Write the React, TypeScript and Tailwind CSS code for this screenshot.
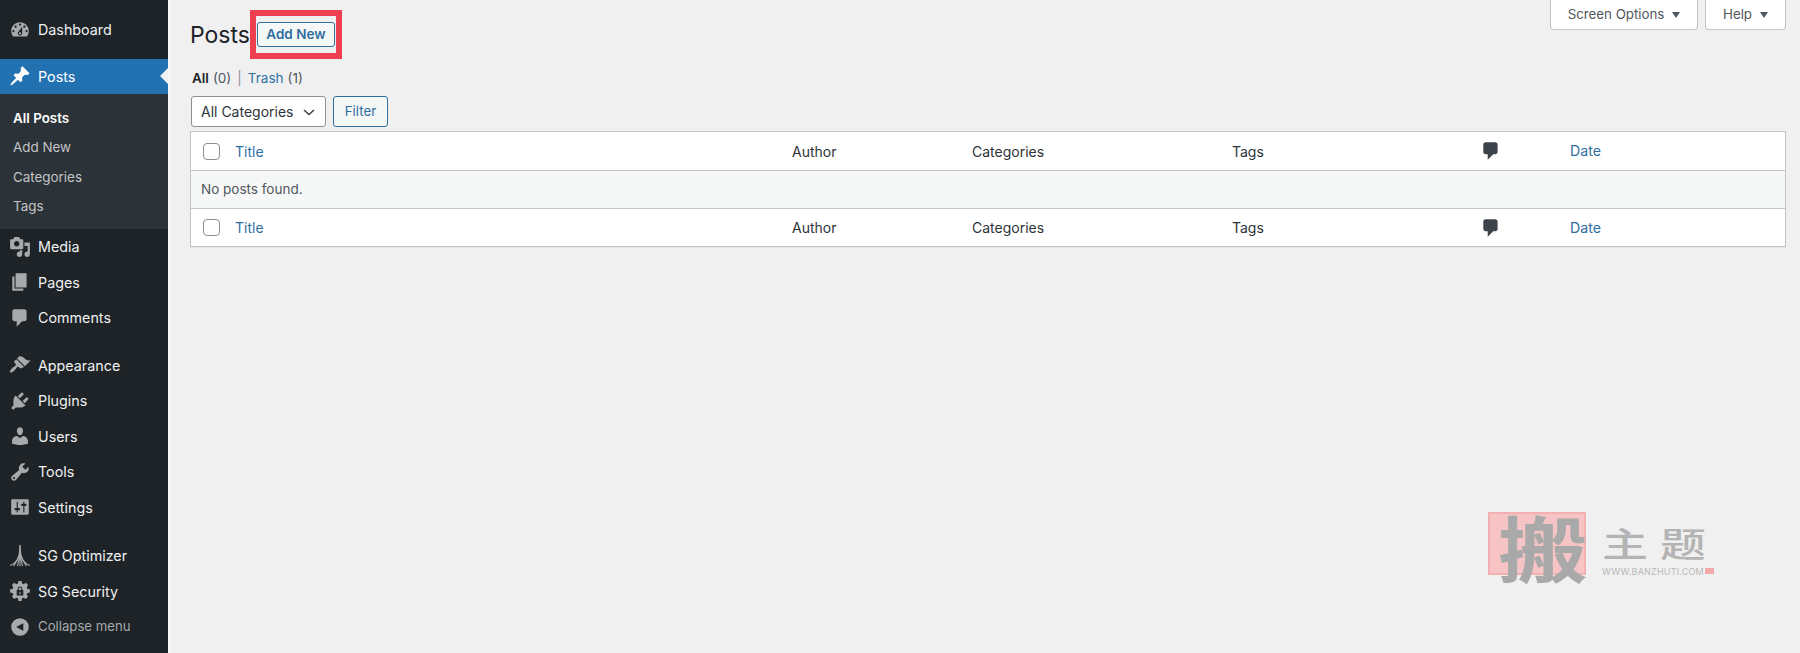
import React from "react";

const P: Record<string, string> = {
  dashboard: "M3.76 16h12.48c1.1-1.37 1.76-3.11 1.76-5 0-4.42-3.58-8-8-8s-8 3.58-8 8c0 1.89.66 3.63 1.76 5zM10 4c.55 0 1 .45 1 1s-.45 1-1 1-1-.45-1-1 .45-1 1-1zM6 6c.55 0 1 .45 1 1s-.45 1-1 1-1-.45-1-1 .45-1 1-1zm8 0c.55 0 1 .45 1 1s-.45 1-1 1-1-.45-1-1 .45-1 1-1zm-5.37 5.55L12 7v6c0 1.1-.9 2-2 2s-2-.9-2-2c0-.57.24-1.08.63-1.45zM4 10c.55 0 1 .45 1 1s-.45 1-1 1-1-.45-1-1 .45-1 1-1zm12 0c.55 0 1 .45 1 1s-.45 1-1 1-1-.45-1-1 .45-1 1-1zm-5 3c0-.55-.45-1-1-1s-1 .45-1 1 .45 1 1 1 1-.45 1-1z",
  post: "M10.44 3.02l1.82-1.82 6.36 6.35-1.83 1.82c-1.05-.68-2.48-.57-3.41.36l-.75.75c-.92.93-1.04 2.35-.35 3.41l-1.83 1.82-2.41-2.41-2.8 2.79c-.42.42-3.38 2.71-3.8 2.29s1.86-3.39 2.28-3.81l2.79-2.79L4.1 9.36l1.83-1.82c1.05.69 2.48.57 3.4-.36l.75-.75c.93-.92 1.05-2.35.36-3.41z",
  media: "M13 11V4c0-.55-.45-1-1-1h-1.67L9 1H5L3.67 3H2c-.55 0-1 .45-1 1v7c0 .55.45 1 1 1h10c.55 0 1-.45 1-1zM7 4.5c1.38 0 2.5 1.12 2.5 2.5S8.38 9.5 7 9.5 4.5 8.38 4.5 7 5.62 4.5 7 4.5zM14 6h5v10.5c0 1.38-1.12 2.5-2.5 2.5S14 17.88 14 16.5s1.12-2.5 2.5-2.5c.17 0 .34.02.5.05V9h-3V6zm-4 8.05V13h2v3.5c0 1.38-1.12 2.5-2.5 2.5S7 17.88 7 16.5 8.12 14 9.5 14c.17 0 .34.02.5.05z",
  page: "M6 15V2h10v13H6zm-1 1h8v2H3V5h2v11z",
  comments: "M5 2h9c1.1 0 2 .9 2 2v7c0 1.1-.9 2-2 2h-2l-5 5v-5H5c-1.1 0-2-.9-2-2V4c0-1.1.9-2 2-2z",
  appearance: "M14.48 11.06L7.41 3.99l1.5-1.5c.5-.56 2.3-.47 3.51.32 1.21.8 1.43 1.28 2.91 2.1 1.18.64 2.45 1.26 4.45.85zm-.71.71L6.7 4.7 4.93 6.47c-.39.39-.39 1.02 0 1.41l1.06 1.06c.39.39.39 1.03 0 1.42-.6.6-1.43 1.11-2.21 1.69-.35.26-.7.53-1.01.84-1.35 1.34-2.38 3.09-1.68 3.79.7.7 2.45-.33 3.8-1.68.31-.31.58-.66.85-1.01.58-.78 1.08-1.61 1.69-2.21.39-.39 1.02-.39 1.41 0l1.06 1.06c.39.39 1.02.39 1.41 0z",
  plugins: "M13.11 4.36L9.87 7.6 8 5.73l3.24-3.24c.35-.34 1.05-.2 1.56.32.52.51.66 1.21.31 1.55zm-8 1.77l.91-1.12 9.01 9.01-1.19.84c-.71.71-2.63 1.16-3.82 1.16H6.14L4.9 17.26c-.59.59-1.54.59-2.12 0-.59-.58-.59-1.53 0-2.12l1.24-1.24v-3.88c0-1.13.4-3.19 1.09-3.89zm7.26 3.97l3.24-3.24c.34-.35 1.04-.21 1.55.31.52.51.66 1.21.31 1.55l-3.24 3.25z",
  users: "M10 9.25c-2.27 0-2.73-3.44-2.73-3.44C7 4.02 7.82 2 9.97 2c2.16 0 2.98 2.02 2.71 3.81 0 0-.41 3.44-2.68 3.44zm0 2.57L12.72 10c2.39 0 4.52 2.33 4.52 4.53v2.49s-3.65 1.13-7.24 1.13c-3.65 0-7.24-1.13-7.24-1.13v-2.49c0-2.25 1.94-4.48 4.47-4.48z",
  tools: "M16.68 9.77c-1.34 1.34-3.3 1.67-4.95.99l-5.41 6.52c-.99.99-2.59.99-3.58 0s-.99-2.59 0-3.57l6.52-5.42c-.68-1.65-.35-3.61.99-4.95 1.28-1.28 3.12-1.62 4.72-1.06l-2.89 2.89 2.82 2.82 2.86-2.87c.53 1.58.18 3.39-1.08 4.67zM3.81 16.21c.4.39 1.04.39 1.43 0 .4-.4.4-1.04 0-1.43-.39-.4-1.03-.4-1.43 0-.39.39-.39 1.03 0 1.43z",
  settings: "M18 16V4c0-.55-.45-1-1-1H3c-.55 0-1 .45-1 1v12c0 .55.45 1 1 1h14c.55 0 1-.45 1-1zM8 11h1c.55 0 1 .45 1 1s-.45 1-1 1H8v1.5c0 .28-.22.5-.5.5s-.5-.22-.5-.5V13H6c-.55 0-1-.45-1-1s.45-1 1-1h1V5.5c0-.28.22-.5.5-.5s.5.22.5.5V11zm5-2h-1c-.55 0-1-.45-1-1s.45-1 1-1h1V5.5c0-.28.22-.5.5-.5s.5.22.5.5V7h1c.55 0 1 .45 1 1s-.45 1-1 1h-1v5.5c0 .28-.22.5-.5.5s-.5-.22-.5-.5V9z",
  security: "M8.6 1h2.8l.5 2.2 1.5.6 1.9-1.2 2 2-1.2 1.9.6 1.5 2.3.6v2.8l-2.3.5-.6 1.5 1.2 1.9-2 2-1.9-1.2-1.5.6-.5 2.3H8.6l-.5-2.3-1.5-.6-1.9 1.2-2-2 1.2-1.9-.6-1.5L1 11.4V8.6l2.3-.6.6-1.5-1.2-1.9 2-2 1.9 1.2 1.5-.6zM7 9.2V14h6V9.2h-.9V8a2.1 2.1 0 0 0-4.2 0v1.2zm1.8 0V8a1.2 1.2 0 0 1 2.4 0v1.2zm.7 1.4h1V13h-1z",
  collapse: "M10 2a8 8 0 1 0 0 16 8 8 0 0 0 0-16zm3 4.5v7L6.5 10z",
};

function Icon({ name, size = 22, className = "" }: { name: string; size?: number; className?: string }) {
  return (
    <svg viewBox="0 0 20 20" width={size} height={size} className={className} fill="currentColor" fillRule="evenodd" clipRule="evenodd">
      <path d={P[name]} />
    </svg>
  );
}

function OptimizerIcon() {
  return (
    <svg viewBox="0 0 20 20" width={22} height={22} className="text-[#a7aaad]" fill="none" stroke="currentColor" strokeWidth="1" strokeLinecap="round">
      <path d="M10 .5C9.8 6 9.2 10.5 7.5 13.5 6 16 3.8 17.5 1.5 18.5" />
      <path d="M10 .5c.2 5.500.8 10 2.500 13 1.500 2.500 3.700 4 6 5" />
      <path d="M10 4c-.2 5-.8 9.500-2.200 14.800M10 4c.2 5 .8 9.500 2.200 14.800M10 6v12.800" />
      <path d="M8.500 11C7.500 14 6 16.500 4.500 18.800M11.500 11c1 3 2.500 5.500 4 7.800" />
    </svg>
  );
}

function MenuItem({ icon, label, active = false, muted = false }: { icon: string; label: string; active?: boolean; muted?: boolean }) {
  return (
    <div className={`relative flex h-[35.5px] items-center pl-[9px] ${active ? "bg-[#2271b1] text-white" : muted ? "text-[#a7aaad]" : "text-[#f0f0f1]"}`}>
      {icon === "optimizer" ? <OptimizerIcon /> : <Icon name={icon} className={active ? "text-white" : "text-[#a7aaad]"} />}
      <span className={`ml-[7px] ${muted ? "text-[13.2px]" : "text-[14.3px]"}`}>{label}</span>
      {active && <span className="absolute right-0 top-1/2 h-0 w-0 -translate-y-1/2 border-y-[8px] border-r-[8px] border-y-transparent border-r-[#f0f0f1]" />}
    </div>
  );
}

function Sidebar() {
  return (
    <aside className="w-[171px] shrink-0 border-r-[3px] border-[#f7f7f7] bg-[#1d2327] pt-3">
      <MenuItem icon="dashboard" label="Dashboard" />
      <div className="mt-[11px]">
        <MenuItem icon="post" label="Posts" active />
      </div>
      <div className="bg-[#2c3338] pb-[8px] pt-[9px] text-[13.4px] text-[#c3c4c7]">
        {["All Posts", "Add New", "Categories", "Tags"].map((t, i) => (
          <div key={t} className={`flex h-[29.5px] items-center pl-[13px] ${i === 0 ? "font-semibold text-white" : ""}`}>{t}</div>
        ))}
      </div>
      <MenuItem icon="media" label="Media" />
      <MenuItem icon="page" label="Pages" />
      <MenuItem icon="comments" label="Comments" />
      <div className="mt-[12px]">
        <MenuItem icon="appearance" label="Appearance" />
        <MenuItem icon="plugins" label="Plugins" />
        <MenuItem icon="users" label="Users" />
        <MenuItem icon="tools" label="Tools" />
        <MenuItem icon="settings" label="Settings" />
      </div>
      <div className="mt-[13px]">
        <MenuItem icon="optimizer" label="SG Optimizer" />
        <MenuItem icon="security" label="SG Security" />
        <MenuItem icon="collapse" label="Collapse menu" muted />
      </div>
    </aside>
  );
}

function Tab({ label, width }: { label: string; width: string }) {
  return (
    <button className={`flex h-[30px] ${width} items-center justify-center gap-[8px] rounded-b-[4px] border border-t-0 border-[#c3c4c7] bg-white text-[13.3px] text-[#50575e]`}>
      {label}
      <span className="h-0 w-0 border-x-[4.5px] border-t-[6px] border-x-transparent border-t-[#50575e]" />
    </button>
  );
}

function Row({ className = "" }: { className?: string }) {
  return (
    <div className={`grid grid-cols-[44px_557px_180px_260px_252px_86px_1fr] items-center bg-white text-[14px] text-[#2c3338] ${className}`}>
      <div className="pl-[12px]">
        <span className="block h-[17px] w-[17px] rounded-[4px] border border-[#8c8f94] bg-white" />
      </div>
      <a className="-mr-1 text-[#2f6f9f]">Title</a>
      <div>Author</div>
      <div>Categories</div>
      <div>Tags</div>
      <div><Icon name="comments" size={22} className="-ml-[4px] text-[#3c434a]" /></div>
      <a className="text-[14.2px] text-[#2f6f9f]">Date</a>
    </div>
  );
}

function Watermark() {
  const cjk = { fontFamily: '"Noto Sans CJK SC", sans-serif' };
  return (
    <div className="pointer-events-none absolute left-[1485px] top-[510px] h-[72px] w-[235px] select-none">
      <div className="absolute left-[3px] top-[2px] h-[63px] w-[98px] border-2 border-[#f3b0b0] bg-[#f6c4c4]" />
      <span className="absolute left-[13px] top-[3px] origin-left scale-x-125 text-[72px] font-bold leading-[66px] text-[#a9a9a9]" style={cjk}>搬</span>
      <span className="absolute left-[117px] top-[14px] origin-center scale-y-75 text-[46px] font-medium leading-[36px] tracking-[12px] text-[#b4b4b4]" style={cjk}>主题</span>
      <span className="absolute left-[117px] top-[56px] text-[9px] leading-[11px] tracking-[0.2px] text-[#b9b9b9]">WWW.BANZHUTI.COM</span>
      <span className="absolute left-[220px] top-[58px] h-[6px] w-[9px] bg-[#f3a9a9]" />
    </div>
  );
}

export default function App() {
  return (
    <div className="relative flex h-[653px] w-[1800px] overflow-hidden bg-[#f0f0f1] font-['Inter',sans-serif] text-[#2c3338]">
      <Sidebar />
      <main className="min-w-0 flex-1 pl-[19px] pr-[14px]">
        <div className="flex items-start justify-between">
          <div className="flex items-start pt-[10px]">
            <h1 className="mt-[11px] text-[23px] leading-[29px] text-[#1d2327]">Posts</h1>
            <div className="border-[6px] border-[#ee3f4f] px-[1px] py-[6px]">
              <button className="flex h-[25px] w-[78px] items-center justify-center rounded-[3px] border border-[#2f6f9f] bg-[#f6f7f7] text-[13.5px] font-semibold text-[#2f6f9f]">Add New</button>
            </div>
          </div>
          <div className="flex gap-[7px]">
            <Tab label="Screen Options" width="w-[148px]" />
            <Tab label="Help" width="w-[81px]" />
          </div>
        </div>
        <div className="mt-[9px] flex h-[20px] items-center text-[13.5px] text-[#50575e]">
          <span className="ml-[2px] font-semibold text-[#1d2327]">All</span>
          <span className="ml-1">(0)</span>
          <span className="mx-[6px] text-[#8c8f94]">|</span>
          <a className="text-[#2f6f9f]">Trash</a>
          <span className="ml-1">(1)</span>
        </div>
        <div className="mt-[8px] flex gap-[7px] pl-[1px]">
          <div className="flex h-[31px] w-[135px] items-center justify-between rounded-[3px] border border-[#8c8f94] bg-white pl-[9px] pr-[8px] text-[14px]">
            All Categories
            <svg viewBox="0 0 16 16" width="16" height="16" fill="none" stroke="#3c434a" strokeWidth="1.6"><path d="M3 6l5 4.5L13 6" /></svg>
          </div>
          <button className="flex h-[31px] w-[55px] items-center justify-center rounded-[3px] border border-[#2f6f9f] bg-[#f6f7f7] text-[13.3px] text-[#2f6f9f]">Filter</button>
        </div>
        <div className="mt-[4px] border border-[#c3c4c7] shadow-[0_1px_1px_rgba(0,0,0,0.04)]">
          <Row className="h-[39px] border-b border-[#c3c4c7]" />
          <div className="flex h-[37px] items-center bg-[#f6f7f7] pl-[10px] text-[13.5px] text-[#50575e]">No posts found.</div>
          <Row className="h-[38px] border-t border-[#c3c4c7]" />
        </div>
      </main>
      <Watermark />
    </div>
  );
}
